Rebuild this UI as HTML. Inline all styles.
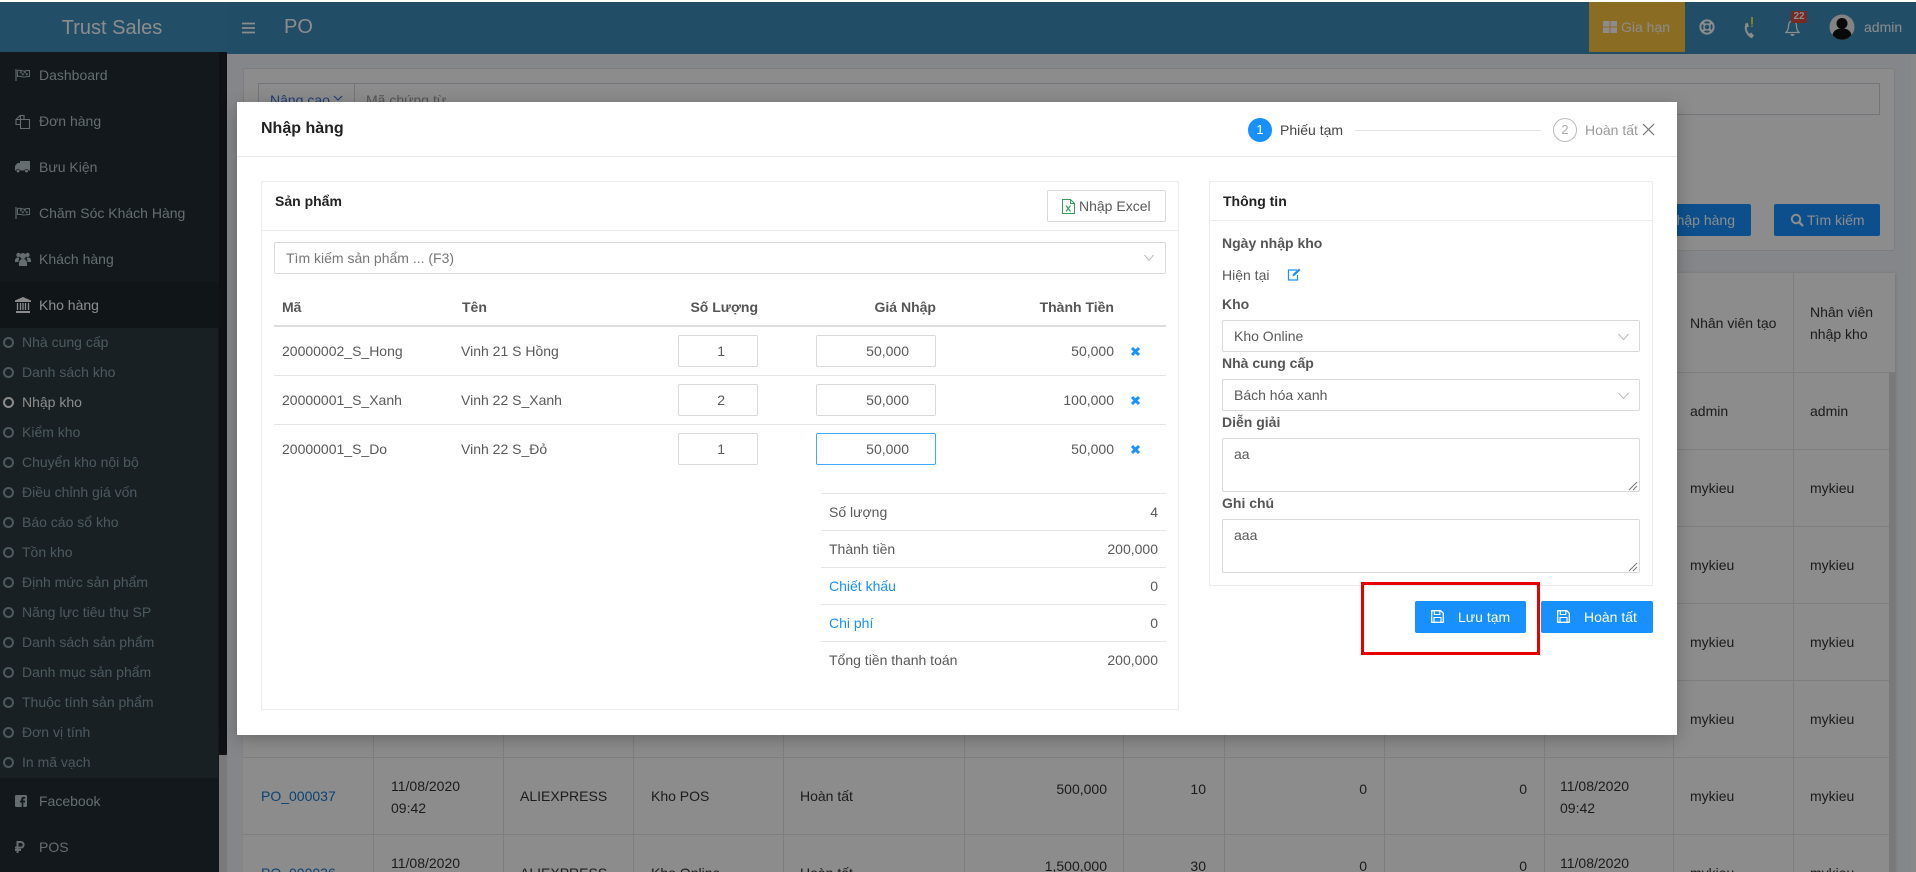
<!DOCTYPE html>
<html lang="vi">
<head>
<meta charset="utf-8">
<title>PO - Nhập hàng</title>
<style>
html,body{margin:0;padding:0;width:1916px;height:872px;overflow:hidden;background:#fff}
*{box-sizing:border-box}
body{font-family:"Liberation Sans","Noto Sans CJK SC",sans-serif;font-size:14px;color:#333;position:relative}
.a,.t{position:absolute}
.t{white-space:nowrap;line-height:20px;height:20px}
.r{text-align:right}
svg{position:absolute;display:block}
#page{position:absolute;left:0;top:2px;width:1916px;height:870px;overflow:hidden;background:#f3f5fa}
#page>*{margin-top:-2px}
.s{color:#b8c7ce}
.sub{color:#8aa4af}
.c{position:absolute;left:3px;width:11px;height:11px;border:2px solid #8aa4af;border-radius:50%}
.vl{position:absolute;width:1px;top:273px;height:600px;background:#e6e6e6}
.hl{position:absolute;height:1px;left:243px;width:1646px;background:#e6e6e6}
#ov{position:absolute;left:0;top:2px;width:1916px;height:870px;background:rgba(0,0,0,.45)}
#m{position:absolute;left:237px;top:102px;width:1440px;height:633px;background:#fff;box-shadow:0 4px 16px rgba(0,0,0,.25);color:#595959}
.in{position:absolute;background:#fff;border:1px solid #d9d9d9;border-radius:2px;line-height:30px;height:32px;text-align:right;padding-right:10px;color:#595959}
.sel{position:absolute;background:#fff;border:1px solid #d9d9d9;border-radius:2px;height:32px;line-height:30px;padding-left:11px;color:#595959}
.ln{position:absolute;height:1px;background:#e4e4e4}
.lb{font-weight:bold;color:#555}
.btn{position:absolute;background:#1890ff;border-radius:2px;height:32px;color:#fff;line-height:32px}
.blue{color:#1890ff}
</style>
</head>
<body>
<div id="page">
  <!-- panel -->
  <div class="a" style="left:243px;top:68px;width:1652px;height:183px;background:#fff;border:1px solid #e3e3e3;border-radius:3px"></div>
  <div class="a" style="left:258px;top:83px;width:1622px;height:32px;background:#fff;border:1px solid #d2d6de"></div>
  <div class="a" style="left:354px;top:83px;width:1px;height:32px;background:#d2d6de"></div>
  <div class="t" style="left:270px;top:90px;color:#3c6fd0">Nâng cao</div>
  <svg style="left:333px;top:95px" width="10" height="7" viewBox="0 0 10 7"><path d="M1 1l4 4 4-4" fill="none" stroke="#3c6fd0" stroke-width="1.100"/></svg>
  <div class="t" style="left:366px;top:90px;color:#999">Mã chứng từ</div>
  <div class="a" style="left:1640px;top:204px;width:111px;height:32px;background:#1890ff;border-radius:2px"></div>
  <div class="t r" style="left:1640px;width:95px;top:210px;color:#fff">Nhập hàng</div>
  <div class="a" style="left:1774px;top:204px;width:106px;height:32px;background:#1890ff;border-radius:2px"></div>
  <svg style="left:1790px;top:213px" width="14" height="14" viewBox="0 0 14 14"><circle cx="6" cy="6" r="4.2" fill="none" stroke="#fff" stroke-width="2"/><path d="M9 9l4 4" stroke="#fff" stroke-width="2.4"/></svg>
  <div class="t" style="left:1807px;top:210px;color:#fff">Tìm kiếm</div>

  <!-- table -->
  <div class="a" style="left:243px;top:273px;width:1652px;height:600px;background:#fff;box-shadow:1px 0 3px rgba(0,0,0,.12)"></div>
  <div class="a" style="left:1889px;top:372px;width:6px;height:500px;background:#dcdcdc"></div>
  <div class="vl" style="left:373px"></div><div class="vl" style="left:503px"></div><div class="vl" style="left:633px"></div><div class="vl" style="left:783px"></div><div class="vl" style="left:964px"></div><div class="vl" style="left:1123px"></div><div class="vl" style="left:1224px"></div><div class="vl" style="left:1384px"></div><div class="vl" style="left:1544px"></div><div class="vl" style="left:1673px"></div><div class="vl" style="left:1793px"></div>
  <div class="hl" style="top:372px"></div><div class="hl" style="top:449px"></div><div class="hl" style="top:526px"></div><div class="hl" style="top:603px"></div><div class="hl" style="top:680px"></div><div class="hl" style="top:757px"></div><div class="hl" style="top:834px"></div>

  <div class="t" style="left:1690px;top:313px">Nhân viên tạo</div>
  <div class="t" style="left:1810px;top:302px">Nhân viên</div>
  <div class="t" style="left:1810px;top:324px">nhập kho</div>
  <div class="t" style="left:1690px;top:401px">admin</div><div class="t" style="left:1810px;top:401px">admin</div>
  <div class="t" style="left:1690px;top:478px">mykieu</div><div class="t" style="left:1810px;top:478px">mykieu</div>
  <div class="t" style="left:1690px;top:555px">mykieu</div><div class="t" style="left:1810px;top:555px">mykieu</div>
  <div class="t" style="left:1690px;top:632px">mykieu</div><div class="t" style="left:1810px;top:632px">mykieu</div>
  <div class="t" style="left:1690px;top:709px">mykieu</div><div class="t" style="left:1810px;top:709px">mykieu</div>

  <div class="t" style="left:261px;top:786px;color:#1677d2">PO_000037</div>
  <div class="t" style="left:391px;top:776px">11/08/2020</div>
  <div class="t" style="left:391px;top:798px">09:42</div>
  <div class="t" style="left:520px;top:786px">ALIEXPRESS</div>
  <div class="t" style="left:651px;top:786px">Kho POS</div>
  <div class="t" style="left:800px;top:786px">Hoàn tất</div>
  <div class="t r" style="left:1000px;width:107px;top:779px">500,000</div>
  <div class="t r" style="left:1150px;width:56px;top:779px">10</div>
  <div class="t r" style="left:1300px;width:67px;top:779px">0</div>
  <div class="t r" style="left:1460px;width:67px;top:779px">0</div>
  <div class="t" style="left:1560px;top:776px">11/08/2020</div>
  <div class="t" style="left:1560px;top:798px">09:42</div>
  <div class="t" style="left:1690px;top:786px">mykieu</div><div class="t" style="left:1810px;top:786px">mykieu</div>

  <div class="t" style="left:261px;top:863px;color:#1677d2">PO_000036</div>
  <div class="t" style="left:391px;top:853px">11/08/2020</div>
  <div class="t" style="left:520px;top:863px">ALIEXPRESS</div>
  <div class="t" style="left:651px;top:863px">Kho Online</div>
  <div class="t" style="left:800px;top:863px">Hoàn tất</div>
  <div class="t r" style="left:1000px;width:107px;top:856px">1,500,000</div>
  <div class="t r" style="left:1150px;width:56px;top:856px">30</div>
  <div class="t r" style="left:1300px;width:67px;top:856px">0</div>
  <div class="t r" style="left:1460px;width:67px;top:856px">0</div>
  <div class="t" style="left:1560px;top:853px">11/08/2020</div>
  <div class="t" style="left:1690px;top:863px">mykieu</div><div class="t" style="left:1810px;top:863px">mykieu</div>

  <div class="a" style="left:1911px;top:54px;width:5px;height:818px;background:#fafafa"></div>

  <!-- header -->
  <div class="a" style="left:0;top:2px;width:1916px;height:52px;background:#3c8dbc"></div>
  <div class="a" style="left:0;top:2px;width:227px;height:50px;background:#3f8fbe"></div>
  <div class="a" style="left:0;top:2px;width:224px;height:52px;text-align:center;line-height:52px;font-size:20px;color:#fff">Trust Sales</div>
  <svg style="left:242px;top:22px" width="13" height="12" viewBox="0 0 13 12"><path d="M0 1.500h13M0 6h13M0 10.500h13" stroke="#fff" stroke-width="1.800"/></svg>
  <div class="t" style="left:284px;top:17px;font-size:20px;color:#fff">PO</div>
  <div class="a" style="left:1589px;top:2px;width:96px;height:50px;background:#fbc640"></div>
  <svg style="left:1603px;top:21px" width="14" height="12" viewBox="0 0 14 12"><path d="M0 0h6.500v5.500H0zM7.500 0H14v5.500H7.500zM0 6.500h6.500V12H0zM7.500 6.500H14V12H7.500z" fill="#fff"/></svg>
  <div class="t" style="left:1621px;top:17px;color:#fff">Gia hạn</div>
  <svg style="left:1699px;top:19px" width="16" height="16" viewBox="0 0 16 16"><circle cx="8" cy="8" r="6.600" fill="none" stroke="#fff" stroke-width="2"/><circle cx="8" cy="8" r="3" fill="none" stroke="#fff" stroke-width="1.500"/><path d="M3.300 3.300l2.600 2.600M12.700 3.300l-2.600 2.600M3.300 12.700l2.600-2.600M12.700 12.700l-2.600-2.600" stroke="#fff" stroke-width="2.400"/></svg>
  <svg style="left:1743px;top:15px" width="14" height="24" viewBox="0 0 14 24"><path d="M3.500 10C1.500 14 4 20 9.500 22.500" fill="none" stroke="#fff" stroke-width="2"/><path d="M2 9l2.500-1.500 1.500 4-2.500 1zM6 19l2-1.500 3 3-2 2z" fill="#fff"/><path d="M9 2v7.500" stroke="#e6ef30" stroke-width="2"/><path d="M9 10.500v1.500" stroke="#e6ef30" stroke-width="1.800"/></svg>
  <svg style="left:1785px;top:20px" width="15" height="16" viewBox="0 0 15 16"><path d="M7.500 1C4.500 1 3.500 3.500 3.500 6c0 3-1 5-2.500 6.500h13C12.500 11 11.500 9 11.500 6c0-2.500-1-5-4-5z" fill="none" stroke="#fff" stroke-width="1.300"/><path d="M5.500 14a2 2 0 004 0z" fill="#fff"/></svg>
  <div class="a" style="left:1791px;top:11px;width:16px;height:12px;background:#dd4b39;border-radius:2px;color:#fff;font-size:10px;font-weight:bold;line-height:12px;text-align:center">22</div>
  <svg style="left:1829px;top:14px" width="26" height="26" viewBox="0 0 26 26"><circle cx="13" cy="13" r="12.500" fill="#eee"/><circle cx="13" cy="9.500" r="5.500" fill="#111"/><path d="M3.500 21c1-5 5-6.500 9.500-6.500s8.500 1.500 9.500 6.500a12 12 0 01-19 0z" fill="#111"/></svg>
  <div class="t" style="left:1864px;top:17px;color:#fff">admin</div>

  <!-- sidebar -->
  <div class="a" style="left:0;top:52px;width:227px;height:820px;background:#222d32"></div>
  <div class="a" style="left:219px;top:755px;width:8px;height:117px;background:#dedede"></div>
  <div class="a" style="left:219px;top:52px;width:8px;height:703px;background:#1a2226;border-radius:0 0 4px 4px"></div>
  <div class="a" style="left:0;top:282px;width:219px;height:46px;background:#1e282c"></div>
  <div class="a" style="left:0;top:328px;width:218px;height:450px;background:#2c3b41"></div>

  <svg style="left:15px;top:69px" width="15" height="12" viewBox="0 0 15 12"><path d="M1 0v12" stroke="#b8c7ce" stroke-width="1.100"/><path d="M2.500 1.500c3-1 5 1 7 .5s3-.5 5-.5v6c-2 0-3 0-5 .5s-4-1.500-7-.5z" fill="none" stroke="#b8c7ce" stroke-width=".9"/><path d="M4.800 2.300h2v2h-2zM6.800 4.300h2v2h-2zM8.800 2.300h2v2h-2zM10.800 4.300h2v2h-2z" fill="#b8c7ce" opacity=".8"/></svg>
  <div class="t s" style="left:39px;top:65px">Dashboard</div>
  <svg style="left:15px;top:114px" width="15" height="15" viewBox="0 0 15 15"><path d="M1 5.500L5 1.500h4v4H5.500v-4M5.500 5.500H1v5h4.500M5.500 5.500h9v9h-9z" fill="none" stroke="#b8c7ce" stroke-width="1.100"/></svg>
  <div class="t s" style="left:39px;top:111px">Đơn hàng</div>
  <svg style="left:15px;top:161px" width="15" height="12" viewBox="0 0 15 12"><path d="M5 0h10v9.500H5zM0 5l2.500-3H5v7.500H0z" fill="#b8c7ce"/><circle cx="3" cy="10" r="1.800" fill="#b8c7ce" stroke="#222d32" stroke-width=".7"/><circle cx="11.500" cy="10" r="1.800" fill="#b8c7ce" stroke="#222d32" stroke-width=".7"/></svg>
  <div class="t s" style="left:39px;top:157px">Bưu Kiện</div>
  <svg style="left:15px;top:207px" width="15" height="12" viewBox="0 0 15 12"><path d="M1 0v12" stroke="#b8c7ce" stroke-width="1.100"/><path d="M2.500 1.500c3-1 5 1 7 .5s3-.5 5-.5v6c-2 0-3 0-5 .5s-4-1.500-7-.5z" fill="none" stroke="#b8c7ce" stroke-width=".9"/><path d="M4.800 2.300h2v2h-2zM6.800 4.300h2v2h-2zM8.800 2.300h2v2h-2zM10.800 4.300h2v2h-2z" fill="#b8c7ce" opacity=".8"/></svg>
  <div class="t s" style="left:39px;top:203px">Chăm Sóc Khách Hàng</div>
  <svg style="left:15px;top:252px" width="16" height="14" viewBox="0 0 16 14"><circle cx="3.500" cy="3" r="2.200" fill="#b8c7ce"/><circle cx="12.500" cy="3" r="2.200" fill="#b8c7ce"/><circle cx="8" cy="4" r="3" fill="#b8c7ce"/><path d="M0 9c0-2.500 1-3.500 3-3.500l1.500 1c-1 1-1 2-1 3.500H0zM16 9c0-2.500-1-3.500-3-3.500l-1.500 1c1 1 1 2 1 3.500H16zM4 14c-.5-5 1-7 4-7s4.500 2 4 7z" fill="#b8c7ce"/></svg>
  <div class="t s" style="left:39px;top:249px">Khách hàng</div>
  <svg style="left:15px;top:297px" width="16" height="16" viewBox="0 0 16 16"><path d="M8 0l8 3.500V5H0V3.500zM1 14h14v2H1z" fill="#fff"/><path d="M2.500 6v7M5.500 6v7M8 6v7M10.500 6v7M13.500 6v7" stroke="#fff" stroke-width="1.300"/></svg>
  <div class="t" style="left:39px;top:295px;color:#fff">Kho hàng</div>

  <div class="c" style="top:337px"></div><div class="t sub" style="left:22px;top:332px">Nhà cung cấp</div>
  <div class="c" style="top:367px"></div><div class="t sub" style="left:22px;top:362px">Danh sách kho</div>
  <div class="c" style="top:397px;border-color:#fff"></div><div class="t" style="left:22px;top:392px;color:#fff">Nhập kho</div>
  <div class="c" style="top:427px"></div><div class="t sub" style="left:22px;top:422px">Kiểm kho</div>
  <div class="c" style="top:457px"></div><div class="t sub" style="left:22px;top:452px">Chuyển kho nội bộ</div>
  <div class="c" style="top:487px"></div><div class="t sub" style="left:22px;top:482px">Điều chỉnh giá vốn</div>
  <div class="c" style="top:517px"></div><div class="t sub" style="left:22px;top:512px">Báo cáo sổ kho</div>
  <div class="c" style="top:547px"></div><div class="t sub" style="left:22px;top:542px">Tồn kho</div>
  <div class="c" style="top:577px"></div><div class="t sub" style="left:22px;top:572px">Định mức sản phẩm</div>
  <div class="c" style="top:607px"></div><div class="t sub" style="left:22px;top:602px">Năng lực tiêu thụ SP</div>
  <div class="c" style="top:637px"></div><div class="t sub" style="left:22px;top:632px">Danh sách sản phẩm</div>
  <div class="c" style="top:667px"></div><div class="t sub" style="left:22px;top:662px">Danh mục sản phẩm</div>
  <div class="c" style="top:697px"></div><div class="t sub" style="left:22px;top:692px">Thuộc tính sản phẩm</div>
  <div class="c" style="top:727px"></div><div class="t sub" style="left:22px;top:722px">Đơn vị tính</div>
  <div class="c" style="top:757px"></div><div class="t sub" style="left:22px;top:752px">In mã vạch</div>

  <svg style="left:15px;top:795px" width="12" height="12" viewBox="0 0 12 12"><path d="M1.500 0h9A1.500 1.500 0 0112 1.500v9a1.500 1.500 0 01-1.500 1.500H8.300V7.500h1.600l.3-1.900H8.300V4.500c0-.6.2-.9 1-.9h.9V2c-.4-.1-1-.1-1.500-.1-1.500 0-2.500.9-2.500 2.500v1.200H5v1.900h1.700V12H1.500A1.500 1.500 0 010 10.500v-9A1.500 1.500 0 011.500 0z" fill="#b8c7ce"/></svg>
  <div class="t s" style="left:39px;top:791px">Facebook</div>
  <svg style="left:15px;top:841px" width="10" height="12" viewBox="0 0 10 12"><path d="M2.500 12V1h3.300a2.700 2.700 0 010 5.600H0M0 9h6" fill="none" stroke="#b8c7ce" stroke-width="2"/></svg>
  <div class="t s" style="left:39px;top:837px">POS</div>
</div>

<div id="ov"></div>

<div id="m">
  <div class="t" style="left:24px;top:17px;font-size:16px;font-weight:bold;color:#222">Nhập hàng</div>
  <div class="a" style="left:1011px;top:16px;width:24px;height:24px;border-radius:50%;background:#1890ff;color:#fff;text-align:center;line-height:24px;font-size:13px">1</div>
  <div class="t" style="left:1043px;top:18px;color:#444">Phiếu tạm</div>
  <div class="ln" style="left:1118px;top:28px;width:186px"></div>
  <div class="a" style="left:1316px;top:16px;width:24px;height:24px;border-radius:50%;border:1px solid #bbb;color:#aaa;text-align:center;line-height:22px;font-size:13px">2</div>
  <div class="t" style="left:1348px;top:18px;color:#9a9a9a">Hoàn tất</div>
  <svg style="left:1405px;top:21px" width="13" height="13" viewBox="0 0 13 13"><path d="M1 1l11 11M12 1L1 12" stroke="#777" stroke-width="1.200"/></svg>
  <div class="ln" style="left:0;top:54px;width:1440px;background:#e8e8e8"></div>

  <!-- left card -->
  <div class="a" style="left:24px;top:79px;width:918px;height:529px;border:1px solid #ececec"></div>
  <div class="t" style="left:38px;top:89px;font-weight:bold;color:#222">Sản phẩm</div>
  <div class="ln" style="left:24px;top:128px;width:918px;background:#ececec"></div>
  <div class="a" style="left:810px;top:88px;width:119px;height:32px;border:1px solid #d9d9d9;border-radius:2px;background:#fff"></div>
  <svg style="left:825px;top:97px" width="13" height="15" viewBox="0 0 13 15"><path d="M.5.500h8l4 4v10H.5z" fill="none" stroke="#3a9a5b"/><path d="M8.500.500v4h4" fill="none" stroke="#3a9a5b"/><path d="M4 6.500l4.500 6M8.500 6.500l-4.500 6" stroke="#3a9a5b" stroke-width="1.200"/></svg>
  <div class="t" style="left:842px;top:94px">Nhập Excel</div>

  <div class="sel" style="left:37px;top:140px;width:892px;color:#777;padding-left:11px">Tìm kiếm sản phẩm ... (F3)</div>
  <svg style="left:907px;top:152px" width="10" height="8" viewBox="0 0 10 8"><path d="M.5 1l4.500 5.500L9.500 1" fill="none" stroke="#bbb"/></svg>

  <div class="t lb" style="left:45px;top:195px">Mã</div>
  <div class="t lb" style="left:225px;top:195px">Tên</div>
  <div class="t lb r" style="left:360px;width:161px;top:195px">Số Lượng</div>
  <div class="t lb r" style="left:500px;width:199px;top:195px">Giá Nhập</div>
  <div class="t lb r" style="left:700px;width:177px;top:195px">Thành Tiền</div>
  <div class="ln" style="left:37px;top:223px;width:892px;height:2px;background:#ddd"></div>

  <div class="t" style="left:45px;top:239px">20000002_S_Hong</div>
  <div class="t" style="left:224px;top:239px">Vinh 21 S Hồng</div>
  <div class="in" style="left:441px;top:233px;width:80px;padding-right:32px">1</div>
  <div class="in" style="left:579px;top:233px;width:120px;padding-right:26px">50,000</div>
  <div class="t r" style="left:700px;width:177px;top:239px">50,000</div>
  <svg style="left:893px;top:244px" width="11" height="11" viewBox="0 0 11 11"><path d="M2 2l7 7M9 2l-7 7" stroke="#1890ff" stroke-width="3"/></svg>
  <div class="ln" style="left:37px;top:273px;width:892px"></div>

  <div class="t" style="left:45px;top:288px">20000001_S_Xanh</div>
  <div class="t" style="left:224px;top:288px">Vinh 22 S_Xanh</div>
  <div class="in" style="left:441px;top:282px;width:80px;padding-right:32px">2</div>
  <div class="in" style="left:579px;top:282px;width:120px;padding-right:26px">50,000</div>
  <div class="t r" style="left:700px;width:177px;top:288px">100,000</div>
  <svg style="left:893px;top:293px" width="11" height="11" viewBox="0 0 11 11"><path d="M2 2l7 7M9 2l-7 7" stroke="#1890ff" stroke-width="3"/></svg>
  <div class="ln" style="left:37px;top:322px;width:892px"></div>

  <div class="t" style="left:45px;top:337px">20000001_S_Do</div>
  <div class="t" style="left:224px;top:337px">Vinh 22 S_Đỏ</div>
  <div class="in" style="left:441px;top:331px;width:80px;padding-right:32px">1</div>
  <div class="in" style="left:579px;top:331px;width:120px;padding-right:26px;border-color:#40a9ff">50,000</div>
  <div class="t r" style="left:700px;width:177px;top:337px">50,000</div>
  <svg style="left:893px;top:342px" width="11" height="11" viewBox="0 0 11 11"><path d="M2 2l7 7M9 2l-7 7" stroke="#1890ff" stroke-width="3"/></svg>

  <div class="ln" style="left:584px;top:391px;width:345px"></div>
  <div class="t" style="left:592px;top:400px">Số lượng</div><div class="t r" style="left:800px;width:121px;top:400px">4</div>
  <div class="ln" style="left:584px;top:428px;width:345px"></div>
  <div class="t" style="left:592px;top:437px">Thành tiền</div><div class="t r" style="left:800px;width:121px;top:437px">200,000</div>
  <div class="ln" style="left:584px;top:465px;width:345px"></div>
  <div class="t blue" style="left:592px;top:474px">Chiết khấu</div><div class="t r" style="left:800px;width:121px;top:474px">0</div>
  <div class="ln" style="left:584px;top:502px;width:345px"></div>
  <div class="t blue" style="left:592px;top:511px">Chi phí</div><div class="t r" style="left:800px;width:121px;top:511px">0</div>
  <div class="ln" style="left:584px;top:539px;width:345px"></div>
  <div class="t" style="left:592px;top:548px">Tổng tiền thanh toán</div><div class="t r" style="left:800px;width:121px;top:548px">200,000</div>

  <!-- right card -->
  <div class="a" style="left:972px;top:79px;width:444px;height:405px;border:1px solid #ececec"></div>
  <div class="t" style="left:986px;top:89px;font-weight:bold;color:#222">Thông tin</div>
  <div class="ln" style="left:972px;top:118px;width:444px;background:#ececec"></div>
  <div class="t lb" style="left:985px;top:131px">Ngày nhập kho</div>
  <div class="t" style="left:985px;top:163px">Hiện tại</div>
  <svg style="left:1050px;top:166px" width="14" height="13" viewBox="0 0 14 13"><path d="M10 2H1.500v10h9V7" fill="none" stroke="#1890ff" stroke-width="1.200"/><path d="M5.500 8.500l.5-2.500 6-5.500 1.500 1.500-6 5.800z" fill="#1890ff"/></svg>
  <div class="t lb" style="left:985px;top:192px">Kho</div>
  <div class="sel" style="left:985px;top:218px;width:418px;padding-left:11px">Kho Online</div>
  <svg style="left:1381px;top:231px" width="11" height="8" viewBox="0 0 11 8"><path d="M.5 1l5 5.500 5-5.500" fill="none" stroke="#bbb"/></svg>
  <div class="t lb" style="left:985px;top:251px">Nhà cung cấp</div>
  <div class="sel" style="left:985px;top:277px;width:418px;padding-left:11px">Bách hóa xanh</div>
  <svg style="left:1381px;top:290px" width="11" height="8" viewBox="0 0 11 8"><path d="M.5 1l5 5.500 5-5.500" fill="none" stroke="#bbb"/></svg>
  <div class="t lb" style="left:985px;top:310px">Diễn giải</div>
  <div class="a" style="left:985px;top:336px;width:418px;height:54px;border:1px solid #d9d9d9;border-radius:2px"></div>
  <div class="t" style="left:997px;top:342px">aa</div>
  <svg style="left:1391px;top:379px" width="10" height="10" viewBox="0 0 10 10"><path d="M1 9l8-8M5 9l4-4" stroke="#777" stroke-width="1"/></svg>
  <div class="t lb" style="left:985px;top:391px">Ghi chú</div>
  <div class="a" style="left:985px;top:417px;width:418px;height:54px;border:1px solid #d9d9d9;border-radius:2px"></div>
  <div class="t" style="left:997px;top:423px">aaa</div>
  <svg style="left:1391px;top:460px" width="10" height="10" viewBox="0 0 10 10"><path d="M1 9l8-8M5 9l4-4" stroke="#777" stroke-width="1"/></svg>

  <div class="btn" style="left:1178px;top:499px;width:111px"></div>
  <svg style="left:1194px;top:508px" width="13" height="13" viewBox="0 0 13 13"><path d="M.7.700h9l2.600 2.600v9H.7z" fill="none" stroke="#fff" stroke-width="1.300"/><path d="M3.300 1v3.500h5.500V1" fill="none" stroke="#fff" stroke-width="1.100"/><path d="M3 12V7.500h7V12" fill="none" stroke="#fff" stroke-width="1.100"/></svg>
  <div class="t" style="left:1221px;top:505px;color:#fff">Lưu tạm</div>
  <div class="btn" style="left:1304px;top:499px;width:112px"></div>
  <svg style="left:1320px;top:508px" width="13" height="13" viewBox="0 0 13 13"><path d="M.7.700h9l2.600 2.600v9H.7z" fill="none" stroke="#fff" stroke-width="1.300"/><path d="M3.300 1v3.500h5.500V1" fill="none" stroke="#fff" stroke-width="1.100"/><path d="M3 12V7.500h7V12" fill="none" stroke="#fff" stroke-width="1.100"/></svg>
  <div class="t" style="left:1347px;top:505px;color:#fff">Hoàn tất</div>

  <div class="a" style="left:1124px;top:480px;width:179px;height:73px;border:3px solid #e60000"></div>
</div>
</body>
</html>
